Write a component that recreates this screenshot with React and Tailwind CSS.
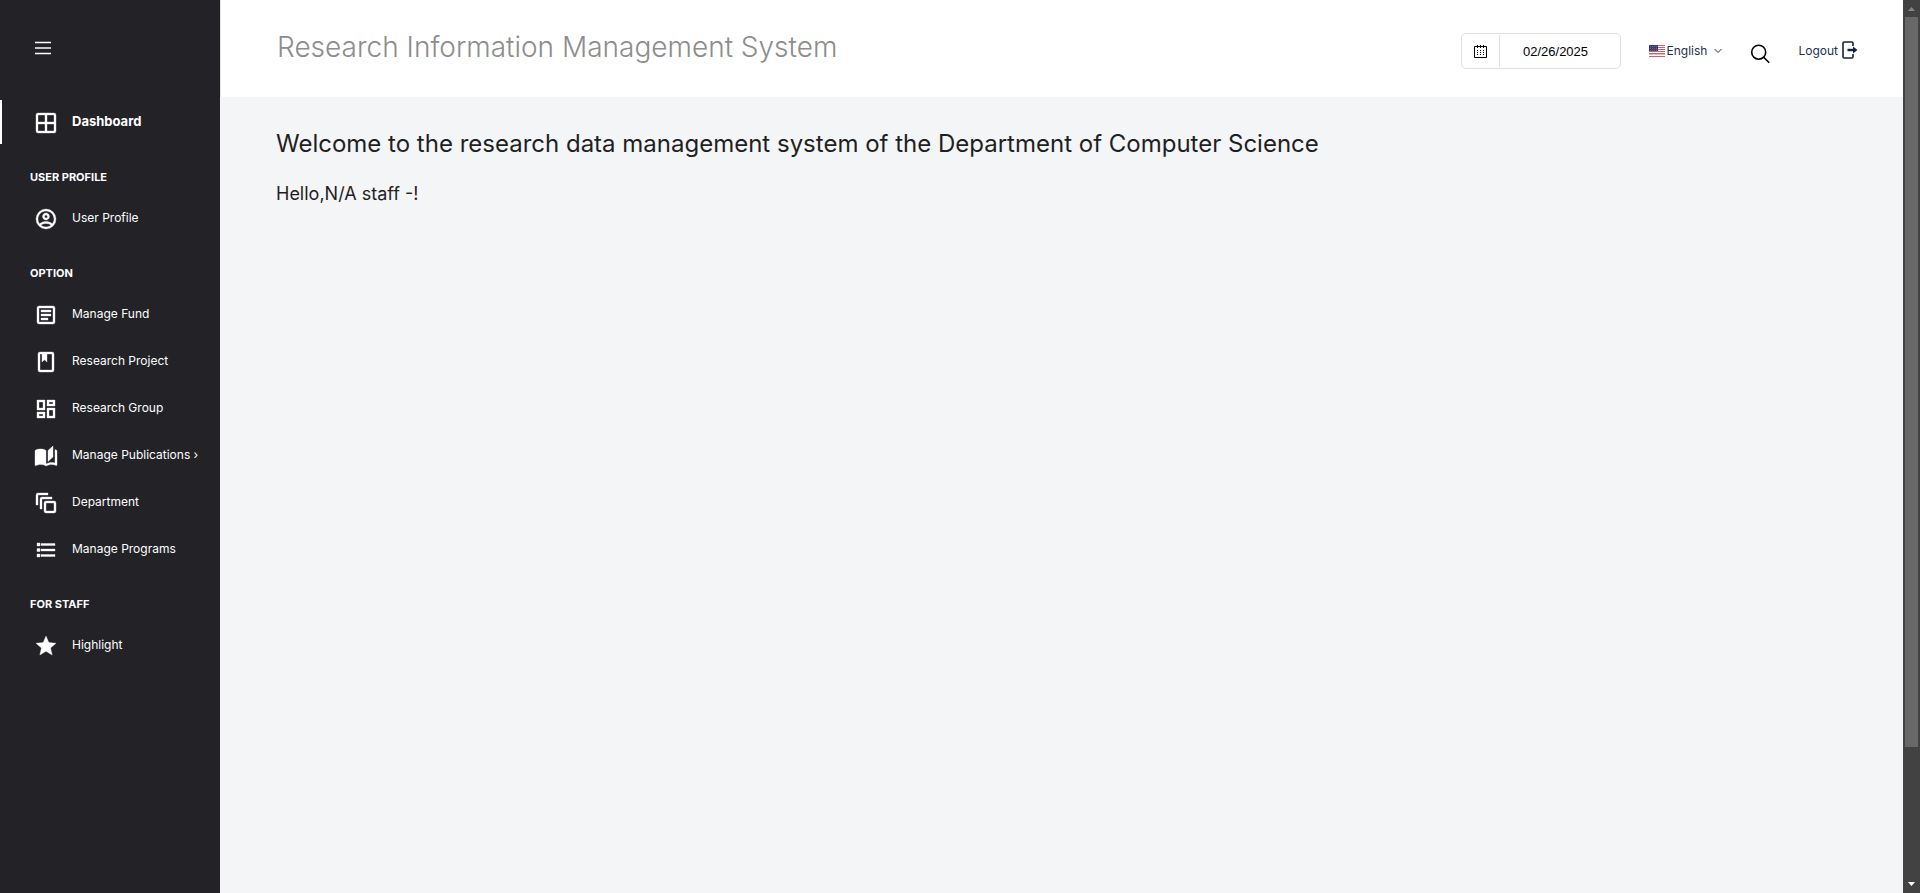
const ICONS = {
  grid: "M4,2H20A2,2 0 0,1 22,4V20A2,2 0 0,1 20,22H4A2,2 0 0,1 2,20V4A2,2 0 0,1 4,2M4,4V11H11V4H4M4,20H11V13H4V20M20,20V13H13V20H20M20,4H13V11H20V4Z",
  user: "M12,2A10,10 0 0,0 2,12A10,10 0 0,0 12,22A10,10 0 0,0 22,12A10,10 0 0,0 12,2M7.07,18.28C7.5,17.38 10.12,16.5 12,16.5C13.88,16.5 16.5,17.38 16.93,18.28C15.57,19.36 13.86,20 12,20C10.14,20 8.43,19.36 7.07,18.28M18.36,16.83C16.93,15.09 13.46,14.5 12,14.5C10.54,14.5 7.07,15.09 5.64,16.83C4.62,15.5 4,13.82 4,12C4,7.59 7.59,4 12,4C16.41,4 20,7.59 20,12C20,13.82 19.38,15.5 18.36,16.83M12,6C10.06,6 8.5,7.56 8.5,9.5C8.5,11.44 10.06,13 12,13C13.94,13 15.5,11.44 15.5,9.5C15.5,7.56 13.94,6 12,6M12,11A1.5,1.5 0 0,1 10.5,9.5A1.5,1.5 0 0,1 12,8A1.5,1.5 0 0,1 13.5,9.5A1.5,1.5 0 0,1 12,11Z",
  fund: "M5,3H19A2,2 0 0,1 21,5V19A2,2 0 0,1 19,21H5A2,2 0 0,1 3,19V5A2,2 0 0,1 5,3M5,5V19H19V5H5M7,7H17V9H7V7M7,11H17V13H7V11M7,15H14V17H7V15Z",
  project: "M18,2A2,2 0 0,1 20,4V20A2,2 0 0,1 18,22H6A2,2 0 0,1 4,20V4A2,2 0 0,1 6,2H18M18,4H13V12L10.5,9.75L8,12V4H6V20H18V4Z",
  group: "M19,5V7H15V5H19M9,5V11H5V5H9M19,13V19H15V13H19M9,17V19H5V17H9M21,3H13V9H21V3M11,3H3V13H11V3M21,11H13V21H21V11M11,15H3V21H11V15Z",
  book: "M19 2L14 6.5V17.5L19 13V2M6.5 5C4.55 5 2.45 5.4 1 6.5V21.16C1 21.41 1.25 21.66 1.5 21.66C1.6 21.66 1.65 21.59 1.75 21.59C3.1 20.94 5.05 20.5 6.5 20.5C8.45 20.5 10.55 20.9 12 22C13.35 21.15 15.8 20.5 17.5 20.5C19.15 20.5 20.85 20.81 22.25 21.56C22.35 21.61 22.4 21.59 22.5 21.59C22.75 21.59 23 21.34 23 21.09V6.5C22.4 6.05 21.75 5.75 21 5.5V19C19.9 18.65 18.7 18.5 17.5 18.5C15.8 18.5 13.35 19.15 12 20V6.5C10.55 5.4 8.45 5 6.5 5Z",
  layers: "M12,10H20A2,2 0 0,1 22,12V20A2,2 0 0,1 20,22H12A2,2 0 0,1 10,20V12A2,2 0 0,1 12,10M12,12V20H20V12H12M18,6V8H8V18H6V8A2,2 0 0,1 8,6H18M14,2V4H4V14H2V4A2,2 0 0,1 4,2H14Z",
  list: "M3,5H6V8H3V5M7,5.5H21V7.5H7V5.5M3,10.5H6V13.5H3V10.5M7,11H21V13H7V11M3,16H6V19H3V16M7,16.5H21V18.5H7V16.5Z",
  star: "M12,17.27L18.18,21L16.54,13.97L22,9.24L14.81,8.62L12,2L9.19,8.62L2,9.24L7.45,13.97L5.82,21L12,17.27Z",
};

function NavItem({ icon, label, active }) {
  return (
    <li className={`flex h-11 items-center ${active ? "border-l-2 border-white pl-8" : "pl-[34px]"}`}>
      <a href="#" className={`flex items-center gap-[14px] whitespace-nowrap ${active ? "text-[13px] font-bold" : "text-[12px]"}`}>
        <svg
          viewBox="0 0 24 24"
          className="mt-[2px] size-6 shrink-0"
          fill="currentColor"
          stroke="currentColor"
          strokeWidth="0.35"
          aria-hidden="true"
        >
          <path d={ICONS[icon]} fillRule="evenodd" />
        </svg>
        {label}
      </a>
    </li>
  );
}

function NavSection({ title, items }) {
  return (
    <section>
      <h2 className="mt-[23px] mb-[9px] h-5 pl-[30px] text-[11px] leading-5 font-bold uppercase">{title}</h2>
      <ul className="flex flex-col gap-[3px]">
        {items.map(([icon, label]) => (
          <NavItem key={label} icon={icon} label={label} />
        ))}
      </ul>
    </section>
  );
}

function Flag() {
  return (
    <svg viewBox="0 0 16 12" className="h-3 w-4" aria-hidden="true">
      <rect width="16" height="12" fill="#fff" />
      {[0, 2, 4, 6, 8, 11].map((y) => (
        <rect key={y} y={y} width="16" height="1" fill="#cf6470" />
      ))}
      <rect y="9" width="16" height="1" fill="#e8b4ba" />
      <rect width="9" height="6" fill="#33416f" />
      {[1, 3, 5, 7].map((x) => (
        <g key={x} fill="#8d97b5">
          <rect x={x} y="1" width="0.7" height="0.7" />
          <rect x={x} y="3" width="0.7" height="0.7" />
          <rect x={x} y="5" width="0.7" height="0.7" />
        </g>
      ))}
    </svg>
  );
}

function Header() {
  return (
    <header className="flex h-[97px] items-start justify-between border-l border-[#dee2e6] bg-white pr-[45px] pl-14">
      <h1 className="pt-7 text-[28px] leading-[38px] font-light whitespace-nowrap text-[#8d8d8d]">
        Research Information Management System
      </h1>
      <div className="flex items-center pt-[33px] text-[12px] text-[#1f2f52]">
        <div className="flex h-9 w-40 items-center rounded-[5px] border border-[#dee2e6] text-black">
          <label htmlFor="date" className="flex h-8 w-[38px] items-center justify-center border-r border-[#dee2e6]" aria-label="Date">
            <svg viewBox="0 0 13 13" className="size-[13px]" fill="none" stroke="currentColor" aria-hidden="true">
              <path d="M.5 1.5h12v11H.5z" />
              <path d="M3.5 0v3M6.500 0v3M9.500 0v3" />
              <path d="M3 5.500h1M6 5.500h1M9 5.500h1M3 7.500h1M6 7.500h1M9 7.500h1M3 9.500h1M6 9.500h1M9 9.500h1" />
            </svg>
          </label>
          <input id="date" defaultValue="02/26/2025" className="h-8 w-28 text-center font-[Liberation_Sans] text-[13px] outline-none" />
        </div>
        <button className="ml-7 flex items-center">
          <Flag />
          <span className="ml-[2px]">English</span>
          <svg viewBox="0 0 8 6" className="ml-[7px] h-[6px] w-2" fill="none" stroke="currentColor" aria-hidden="true">
            <path d="M.5 1l3.500 3.500L7.500 1" />
          </svg>
        </button>
        <button aria-label="Search" className="mt-[6px] ml-7 text-black">
          <svg viewBox="0 0 20 20" className="size-5" fill="none" stroke="currentColor" strokeWidth="1.600" aria-hidden="true">
            <circle cx="8.700" cy="8.200" r="7" />
            <path d="M13.700 13.200l5.500 5.500" />
          </svg>
        </button>
        <a href="#" className="ml-7 flex items-center gap-1">
          Logout
          <svg viewBox="0 0 16 18" className="mb-[2px] h-[18px] w-4" fill="none" stroke="#14213d" strokeWidth="1.600" aria-hidden="true">
            <path d="M11 5V2.300a1.300 1.300 0 0 0-1.300-1.300H2.300A1.300 1.300 0 0 0 1 2.300v13.400A1.300 1.300 0 0 0 2.300 17h7.400a1.300 1.300 0 0 0 1.300-1.300V13" />
            <path d="M5.500 9h6" strokeWidth="2.400" />
            <path d="M11 5.500L15.500 9 11 12.500z" fill="#14213d" stroke="none" />
          </svg>
        </a>
      </div>
    </header>
  );
}

function ScrollRail() {
  return (
    <div className="flex w-[17px] shrink-0 flex-col items-center bg-[#424242]" aria-hidden="true">
      <svg viewBox="0 0 17 17" className="size-[17px]"><path d="M5 11h7L8.500 7z" fill="#868686" /></svg>
      <div className="w-[13px] grow-[730] bg-[#686868]" />
      <div className="grow-[129]" />
      <svg viewBox="0 0 17 17" className="size-[17px]"><path d="M5 6h7L8.500 10z" fill="#fff" /></svg>
    </div>
  );
}

export default function App() {
  return (
    <div className="flex min-h-screen bg-[#f4f5f7] font-[Inter,sans-serif]">
      <aside className="w-[220px] shrink-0 bg-[#222227] text-white">
        <button aria-label="Toggle menu" className="mt-10 ml-[35px] block h-4 w-4">
          <svg viewBox="0 0 16 16" className="size-4" fill="none" stroke="currentColor" strokeWidth="1.400" aria-hidden="true">
            <path d="M0 2.500h16M0 8h16M0 13.500h16" />
          </svg>
        </button>
        <nav className="mt-11">
          <ul>
            <NavItem icon="grid" label="Dashboard" active />
          </ul>
          <NavSection title="User Profile" items={[["user", "User Profile"]]} />
          <NavSection
            title="Option"
            items={[
              ["fund", "Manage Fund"],
              ["project", "Research Project"],
              ["group", "Research Group"],
              ["book", "Manage Publications ›"],
              ["layers", "Department"],
              ["list", "Manage Programs"],
            ]}
          />
          <NavSection title="For Staff" items={[["star", "Highlight"]]} />
        </nav>
      </aside>
      <div className="min-w-0 grow">
        <Header />
        <main className="px-14 pt-[29px] text-[#1f1f1f]">
          <h2 className="text-[24px] leading-9">
            Welcome to the research data management system of the Department of Computer Science
          </h2>
          <p className="mt-5 text-[18px] leading-6">Hello,N/A staff -!</p>
        </main>
      </div>
      <ScrollRail />
    </div>
  );
}
